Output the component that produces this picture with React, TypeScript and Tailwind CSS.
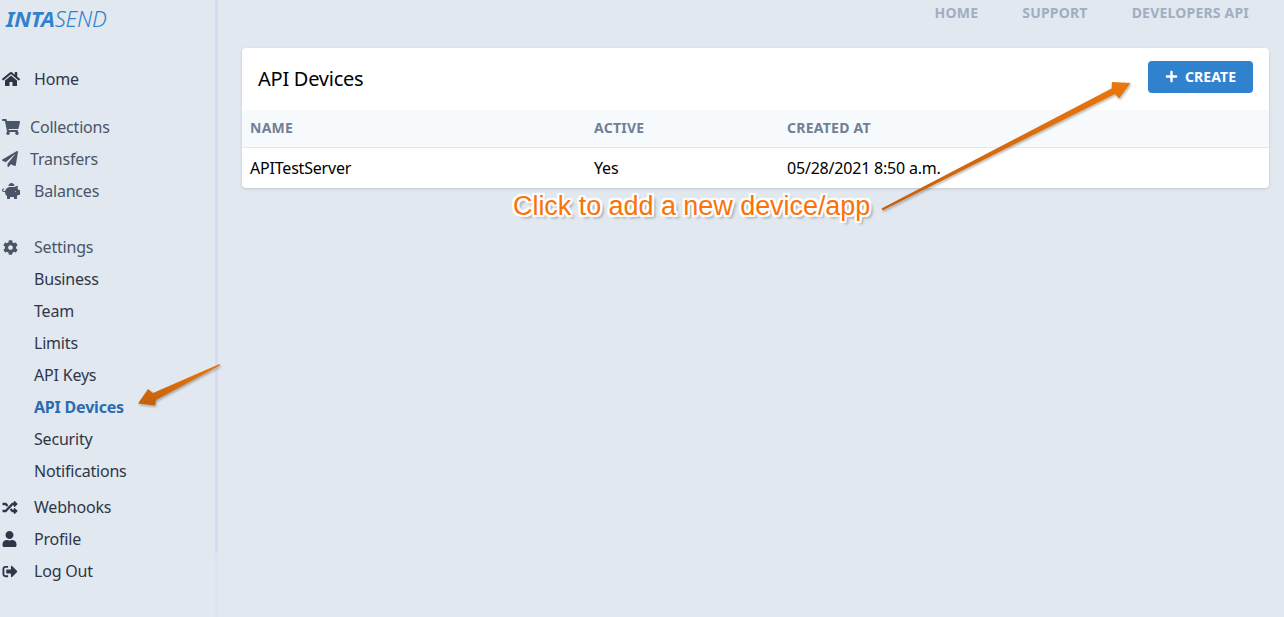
import React from "react";
import { FaHome, FaShoppingCart, FaPaperPlane, FaPiggyBank, FaCog, FaRandom, FaUser, FaSignOutAlt, FaPlus } from "react-icons/fa";

const font = { fontFamily: '"Noto Sans", sans-serif' };

function Item({ icon, label, gap = "pl-[34px]", active = false, strong = false }: { icon?: React.ReactNode; label: string; gap?: string; active?: boolean; strong?: boolean }) {
  return (
    <div className={`relative flex h-8 items-center ${gap} text-[16px] tracking-[-0.2px] ${active ? "font-bold text-[#2b6cb0]" : strong ? "text-[#2d3748]" : "text-[#4a5568]"}`}>
      {icon && <span className="absolute left-[2px] top-[7px] flex h-[18px] w-[19px] items-center">{icon}</span>}
      {label}
    </div>
  );
}

export default function App() {
  return (
    <div className="relative flex h-[617px] w-[1284px] overflow-hidden bg-[#e2e8f0]" style={font}>
      <aside className="flex w-[218px] shrink-0">
        <div className="w-[215px]">
          <div className="flex h-[63px] items-start pl-[6px] pt-[3px] text-[22px] italic leading-[30px] tracking-[-0.2px] text-[#3182ce]">
            <span className="font-bold">INTA</span><span className="font-light">SEND</span>
          </div>
          <Item strong label="Home" icon={<FaHome className="h-[16px] w-[18px] text-[#2d3748]" />} />
          <div className="h-4" />
          <Item gap="pl-[30px]" label="Collections" icon={<FaShoppingCart className="h-[16px] w-[18px] text-[#4a5568]" />} />
          <Item gap="pl-[30px]" label="Transfers" icon={<FaPaperPlane className="h-[16px] w-[16px] text-[#4a5568]" />} />
          <Item label="Balances" icon={<FaPiggyBank className="h-[16px] w-[18px] text-[#4a5568]" />} />
          <div className="h-6" />
          <Item label="Settings" icon={<FaCog className="ml-[1px] h-[15px] w-[15px] text-[#4a5568]" />} />
          <Item strong label="Business" />
          <Item strong label="Team" />
          <Item strong label="Limits" />
          <Item strong label="API Keys" />
          <Item active label="API Devices" />
          <Item strong label="Security" />
          <Item strong label="Notifications" />
          <div className="h-1" />
          <Item strong label="Webhooks" icon={<FaRandom className="h-[15px] w-[16px] text-[#2d3748]" />} />
          <Item strong label="Profile" icon={<FaUser className="h-[16px] w-[15px] text-[#2d3748]" />} />
          <Item strong label="Log Out" icon={<FaSignOutAlt className="h-[15px] w-[16px] text-[#2d3748]" />} />
        </div>
        <div className="flex w-[3px] flex-col">
          <div className="h-[553px] bg-[#d6daf3]" />
          <div className="flex-1 bg-[#dfe4f2]" />
        </div>
      </aside>

      <main className="flex-1 pl-6 pr-[15px]">
        <nav className="flex h-[48px] items-start justify-end gap-[44px] pr-[20px] pt-[3px] text-[14px] font-bold uppercase leading-[20px] tracking-[0.2px] text-[#a0aec0]">
          <span>Home</span>
          <span>Support</span>
          <span>Developers API</span>
        </nav>
        <section className="overflow-hidden rounded bg-white shadow-[0_1px_3px_rgba(0,0,0,0.15)]">
          <div className="flex h-[62px] items-start justify-between pl-4 pr-4">
            <h1 className="mt-[16px] text-[20px] leading-[30px] tracking-[-0.25px] text-black">API Devices</h1>
            <button className="mt-[13px] flex h-8 w-[105px] items-center justify-center gap-[7px] rounded bg-[#3182ce] pb-[2px] text-[14px] font-bold uppercase tracking-[0.1px] text-white">
              <FaPlus className="mt-[1px] h-[13px] w-[13px]" />
              Create
            </button>
          </div>
          <div className="grid h-[38px] grid-cols-[344px_193px_1fr] items-center border-b border-[#e2e8f0] bg-[#f7fafc] px-2 pb-[2px] text-[14px] font-bold uppercase tracking-[0.25px] text-[#718096]">
            <span>Name</span>
            <span>Active</span>
            <span>Created at</span>
          </div>
          <div className="grid h-[40px] grid-cols-[344px_193px_1fr] items-center px-2 text-[16px] tracking-[-0.2px] text-black">
            <span>APITestServer</span>
            <span>Yes</span>
            <span>05/28/2021 8:50 a.m.</span>
          </div>
        </section>
      </main>

      <svg className="pointer-events-none absolute left-0 top-0" width="1284" height="617" viewBox="0 0 1284 617">
        <defs>
          <linearGradient id="ar" x1="0" y1="0" x2="0" y2="1">
            <stop offset="0" stopColor="#ea7610" />
            <stop offset="1" stopColor="#c4600f" />
          </linearGradient>
          <filter id="sh" x="-20%" y="-20%" width="140%" height="140%">
            <feDropShadow dx="1" dy="1.5" stdDeviation="1" floodColor="#000" floodOpacity="0.3" />
          </filter>
        </defs>
        <path d="M881.5 208.5 L1111.5 88.5 L1112 82 L1130.5 83 L1119 98.5 L1115 94 L882.5 210.5 Z" fill="url(#ar)" filter="url(#sh)" />
        <path d="M219.5 364 L153 393 L148 389 L138 403.5 L155 405.5 L156 400 L220 365.5 Z" fill="url(#ar)" filter="url(#sh)" />
      </svg>

      <div className="absolute left-[513px] top-[188px] whitespace-nowrap text-[27px] leading-[36px] tracking-[-0.05px] text-[#f9730b] [font-family:'Liberation_Sans',Arial,sans-serif] [text-shadow:0_0_2px_#fff,2px_2px_1px_#fff,-2px_-2px_1px_#fff,2px_-2px_1px_#fff,-2px_2px_1px_#fff,0_2px_1px_#fff,0_-2px_1px_#fff,2px_0_1px_#fff,-2px_0_1px_#fff,3px_3px_3px_rgba(0,0,0,0.4)]">
        Click to add a new device/app
      </div>
    </div>
  );
}
